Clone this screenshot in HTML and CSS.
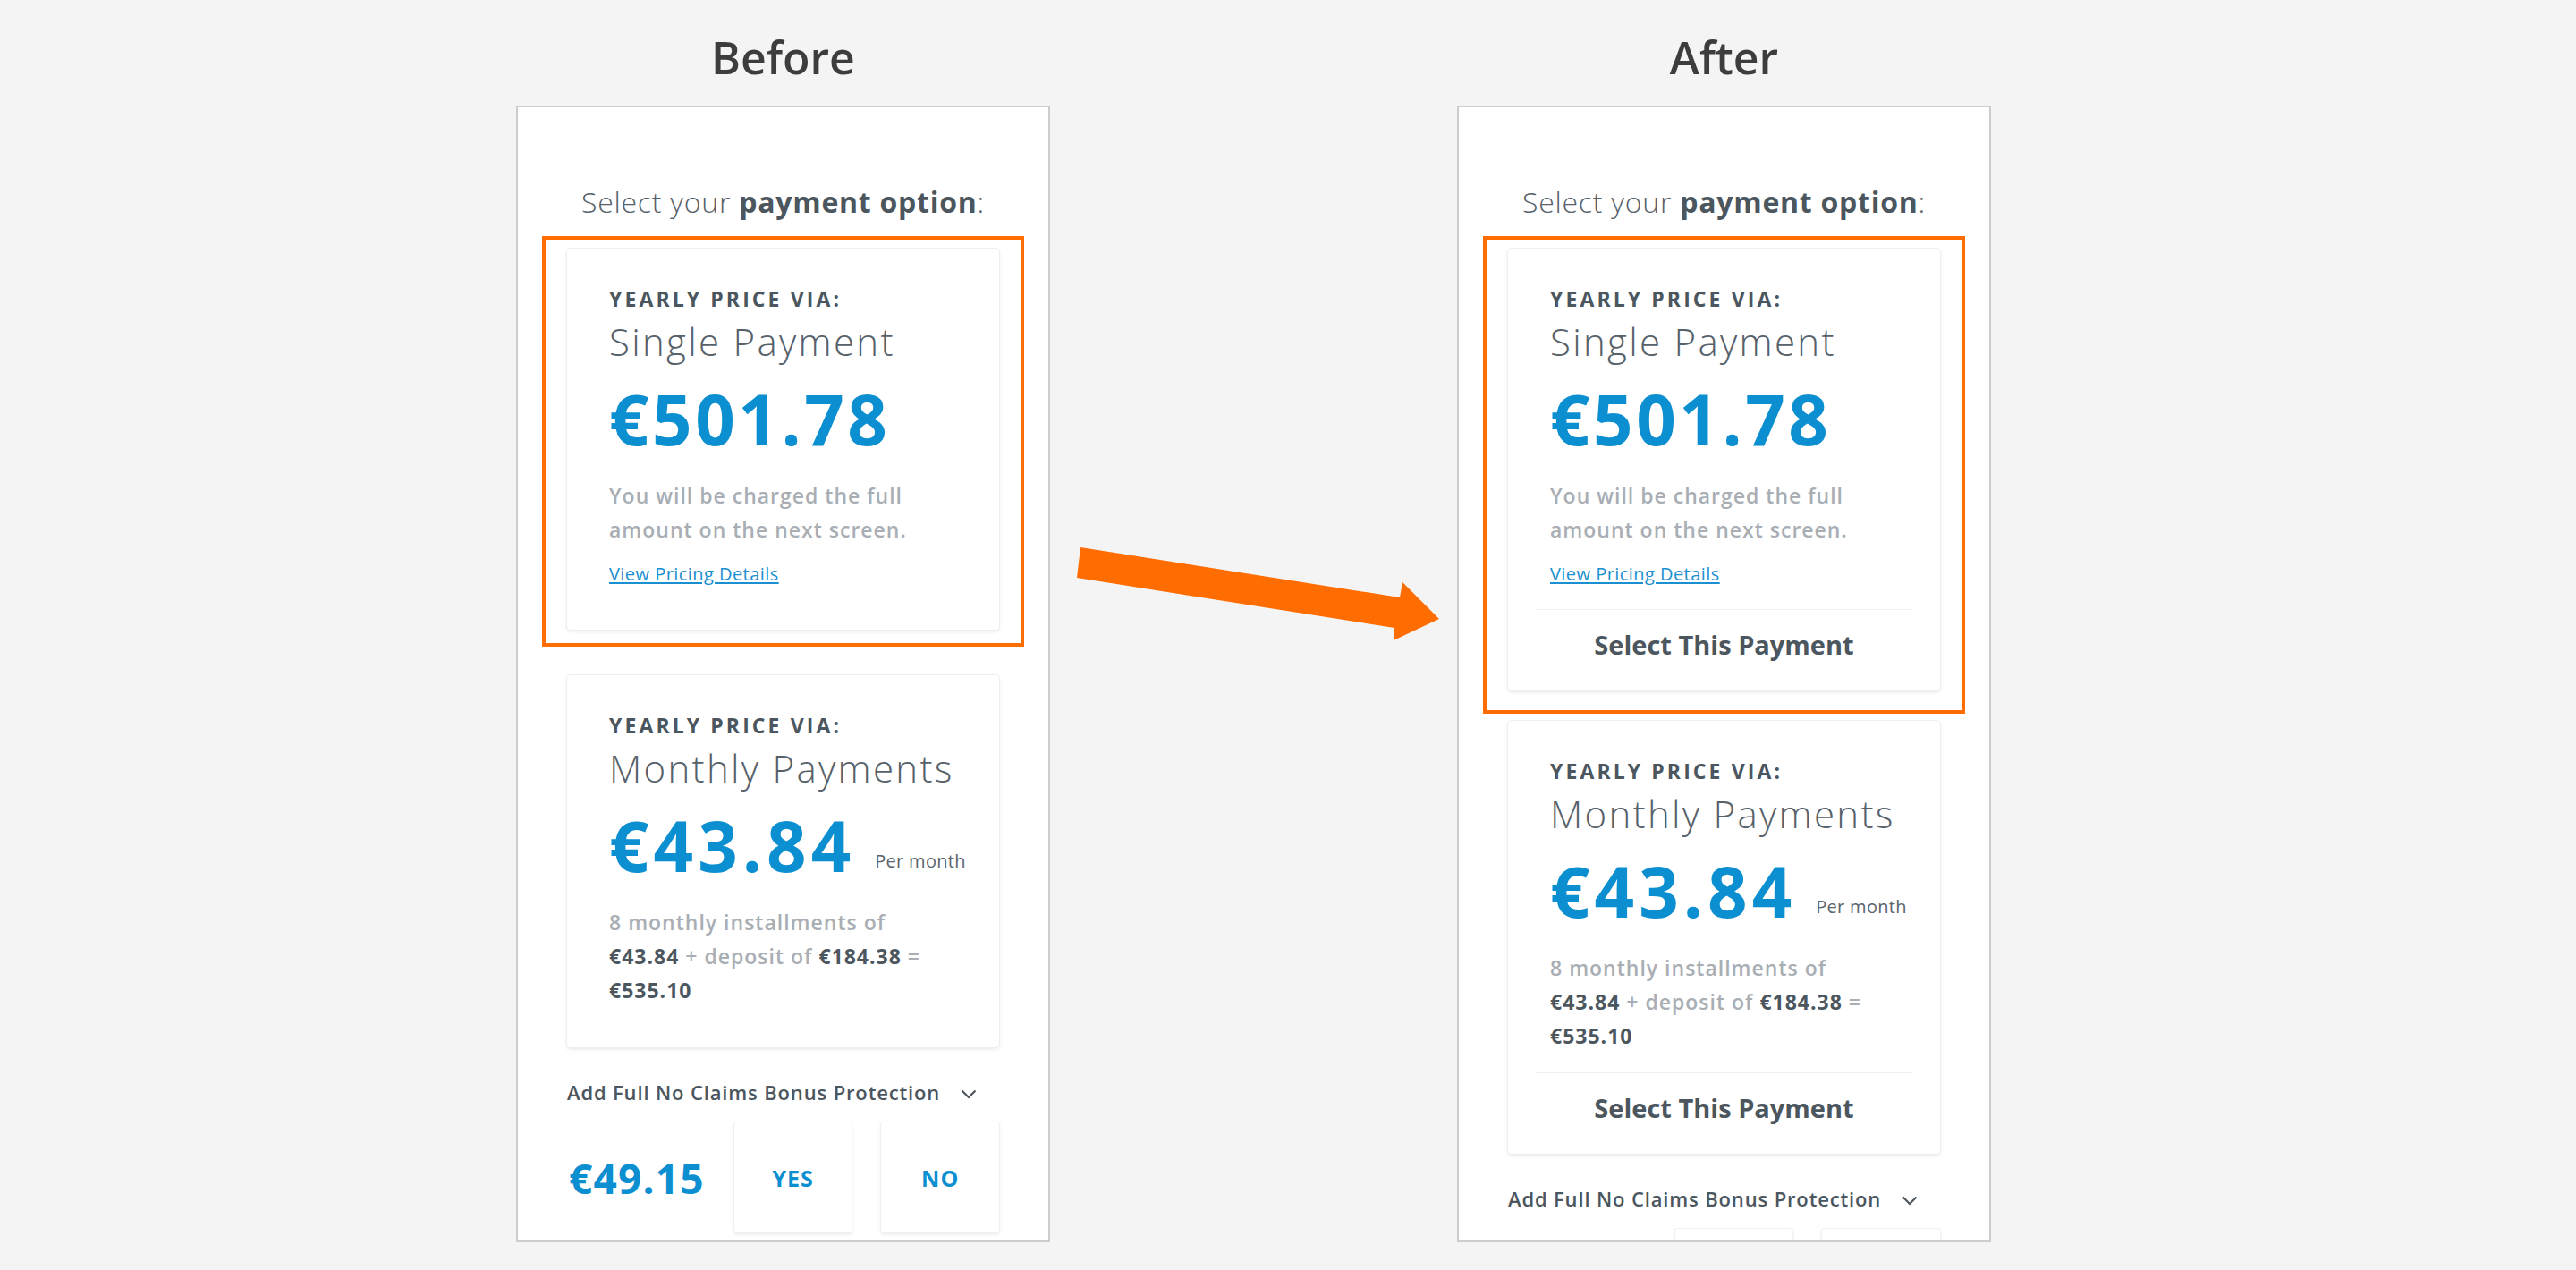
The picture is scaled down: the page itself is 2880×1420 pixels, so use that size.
FILE: index.html
```html
<!DOCTYPE html>
<html>
<head>
  <meta charset="UTF-8">
  <title>Payment option - before / after</title>
  <link rel="stylesheet" href="styles.css">
</head>
<body>
  <div class="page">

    <div class="shot">
      <h1 class="shot-title">Before</h1>
      <div class="phone">
        <p class="intro">Select your <b>payment option</b>:</p>

        <div class="highlight">
          <div class="option">
            <div class="option-body">
              <div class="option-label">YEARLY PRICE VIA:</div>
              <div class="option-name">Single Payment</div>
              <div class="option-price">€501.78</div>
              <p class="option-note">You will be charged the full<br>amount on the next screen.</p>
              <a class="option-link" href="#">View Pricing Details</a>
            </div>
          </div>
        </div>

        <div class="option option-second">
          <div class="option-body">
            <div class="option-label">YEARLY PRICE VIA:</div>
            <div class="option-name">Monthly Payments</div>
            <div class="option-price option-price-monthly">€43.84<span class="per">Per month</span></div>
            <p class="option-note"><b>8 monthly installments of</b><br><strong>€43.84</strong> + deposit of <strong>€184.38</strong> =<br><strong>€535.10</strong></p>
          </div>
        </div>

        <div class="ncb">
          <div class="ncb-title">
            Add Full No Claims Bonus Protection
            <svg class="chevron" width="18" height="11" viewBox="0 0 18 11"><polyline points="1.5,1.5 9,9 16.5,1.5" fill="none" stroke="#4b565e" stroke-width="2.2"/></svg>
          </div>
          <div class="ncb-row">
            <div class="ncb-price">€49.15</div>
            <button class="ncb-btn">YES</button>
            <button class="ncb-btn">NO</button>
          </div>
        </div>
      </div>
    </div>

    <div class="arrow-col">
      <svg class="arrow" width="405" height="104" viewBox="0 0 405 104">
        <polygon points="4,0 361,56 364,39 405,80 354,104 355,90 0,34" fill="#ff6d00"/>
      </svg>
    </div>

    <div class="shot">
      <h1 class="shot-title">After</h1>
      <div class="phone">
        <p class="intro">Select your <b>payment option</b>:</p>

        <div class="highlight highlight-after">
          <div class="option selectable">
            <div class="option-body">
              <div class="option-label">YEARLY PRICE VIA:</div>
              <div class="option-name">Single Payment</div>
              <div class="option-price">€501.78</div>
              <p class="option-note">You will be charged the full<br>amount on the next screen.</p>
              <a class="option-link" href="#">View Pricing Details</a>
            </div>
            <div class="option-select">Select This Payment</div>
          </div>
        </div>

        <div class="option option-second selectable">
          <div class="option-body">
            <div class="option-label">YEARLY PRICE VIA:</div>
            <div class="option-name">Monthly Payments</div>
            <div class="option-price option-price-monthly">€43.84<span class="per">Per month</span></div>
            <p class="option-note"><b>8 monthly installments of</b><br><strong>€43.84</strong> + deposit of <strong>€184.38</strong> =<br><strong>€535.10</strong></p>
          </div>
          <div class="option-select">Select This Payment</div>
        </div>

        <div class="ncb">
          <div class="ncb-title">
            Add Full No Claims Bonus Protection
            <svg class="chevron" width="18" height="11" viewBox="0 0 18 11"><polyline points="1.5,1.5 9,9 16.5,1.5" fill="none" stroke="#4b565e" stroke-width="2.2"/></svg>
          </div>
          <div class="ncb-row">
            <div class="ncb-price">€49.15</div>
            <button class="ncb-btn">YES</button>
            <button class="ncb-btn">NO</button>
          </div>
        </div>
      </div>
    </div>

  </div>
</body>
</html>
```

FILE: styles.css
```css
body {
  margin: 0;
  height: 1420px;
  overflow: hidden;
  background: #f4f4f4;
  font-family: "Open Sans", "Liberation Sans", sans-serif;
  color: #4b565e;
}

.page {
  display: flex;
  padding: 34px 0 0 577px;
}

/* one screenshot column */
.shot {
  width: 597px;
  flex-shrink: 0;
}

.shot-title {
  margin: 0 0 24px;
  font-size: 50px;
  line-height: 60px;
  font-weight: 600;
  text-align: center;
  color: #3d3d3d;
}

.phone {
  box-sizing: border-box;
  height: 1271px;
  padding: 86px 55px 0;
  background: #fff;
  border: 2px solid #cdcdcd;
  overflow: hidden;
}

.intro {
  margin: 0 0 18px;
  font-size: 32px;
  line-height: 40px;
  font-weight: 300;
  letter-spacing: 0.75px;
  text-align: center;
  color: #56616a;
}

.intro b {
  font-weight: 700;
  color: #4b565e;
}

/* orange annotation frame */
.highlight {
  margin: 0 -28px;
  padding: 10px 24px 15px;
  border: 4px solid #ff6c00;
}

.highlight-after {
  padding-bottom: 22px;
}

.option {
  background: #fff;
  border-radius: 4px;
  box-shadow: 0 0 0 1px #eceef0, 0 2px 4px rgba(0, 0, 0, 0.1);
}

.option-second {
  margin-top: 32px;
}

.highlight-after + .option-second {
  margin-top: 8px;
}

.option-body {
  padding: 42px 47px 45px;
}

.selectable .option-body {
  padding-bottom: 22px;
}

.option-label {
  font-size: 23px;
  line-height: 28px;
  font-weight: 700;
  letter-spacing: 3.1px;
  color: #4b565e;
}

.option-name {
  margin-top: 9px;
  font-size: 42px;
  line-height: 50px;
  font-weight: 300;
  letter-spacing: 2.3px;
  color: #56616a;
}

.option-price {
  margin-top: 16px;
  font-size: 78px;
  line-height: 90px;
  font-weight: 700;
  color: #0b8fd0;
  letter-spacing: 3.5px;
  white-space: nowrap;
}

.option-price-monthly {
  letter-spacing: 5px;
}

.option-price .per {
  margin-left: 22px;
  font-size: 20px;
  line-height: 20px;
  font-weight: 400;
  letter-spacing: 0.3px;
  color: #5a646c;
  vertical-align: 5px;
}

.option-note {
  margin: 22px 0 0;
  font-size: 23px;
  line-height: 38px;
  font-weight: 600;
  letter-spacing: 1px;
  color: #a8aeb4;
}

.option-note b {
  font-weight: 600;
}

.option-note strong {
  font-weight: 700;
  color: #4b565e;
}

.option-link {
  display: inline-block;
  margin: 19px 0 5px;
  font-size: 20px;
  line-height: 24px;
  letter-spacing: 0.45px;
  color: #1a90d0;
  text-decoration: underline;
  text-underline-offset: 2px;
}

.option-select {
  margin: 0 31px;
  padding: 21px 0 34px;
  border-top: 1px solid #edf0f2;
  text-align: center;
  font-size: 29px;
  line-height: 35px;
  font-weight: 700;
  color: #4b565e;
}

/* no claims bonus add-on */
.ncb {
  margin-top: 37px;
}

.ncb-title {
  display: flex;
  align-items: center;
  font-size: 22px;
  line-height: 26px;
  font-weight: 600;
  letter-spacing: 0.85px;
  color: #4b565e;
}

.chevron {
  margin-left: 23px;
  margin-top: 4px;
}

.ncb-row {
  display: flex;
  align-items: center;
  gap: 33px;
  margin-top: 21px;
}

.ncb-price {
  flex: 1;
  padding-left: 2px;
  font-size: 46px;
  font-weight: 700;
  letter-spacing: 1.2px;
  color: #0b8fd0;
}

.ncb-btn {
  width: 133px;
  height: 123px;
  padding: 0;
  border: none;
  border-radius: 3px;
  background: #fff;
  box-shadow: 0 0 0 1px #eef0f2, 0 2px 4px rgba(0, 0, 0, 0.1);
  font-family: inherit;
  font-size: 25px;
  font-weight: 700;
  letter-spacing: 1px;
  color: #0b8fd0;
}

.arrow-col {
  width: 455px;
  flex-shrink: 0;
}

.arrow {
  display: block;
  margin: 578px 0 0 30px;
}
```
